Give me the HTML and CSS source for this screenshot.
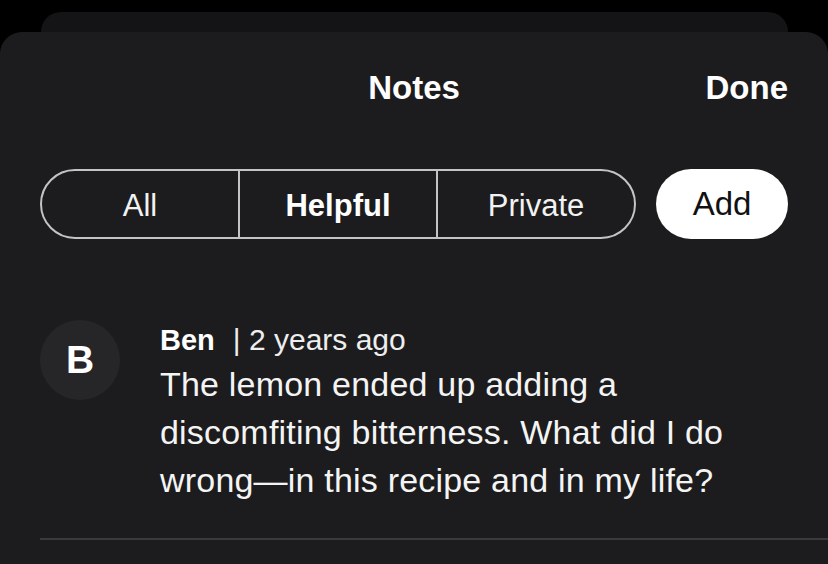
FILE: index.html
```html
<!DOCTYPE html>
<html>
<head>
<meta charset="utf-8">
<link rel="stylesheet" href="styles.css">
</head>
<body>
<div class="screen">
  <div class="back-card"></div>
  <div class="sheet">
    <header class="header">
      <div class="spacer"></div>
      <h1 class="title">Notes</h1>
      <div class="done">Done</div>
    </header>
    <div class="controls">
      <div class="segmented">
        <div class="seg">All</div>
        <div class="seg active">Helpful</div>
        <div class="seg">Private</div>
      </div>
      <button class="add">Add</button>
    </div>
    <div class="note">
      <div class="avatar">B</div>
      <div class="note-body">
        <div class="meta"><span class="name">Ben</span><span class="time">| 2 years ago</span></div>
        <p class="text">The lemon ended up adding a discomfiting bitterness. What did I do wrong—in this recipe and in my life?</p>
      </div>
    </div>
    <div class="divider"></div>
  </div>
</div>
</body>
</html>
```
FILE: styles.css
```css
* { box-sizing: border-box; }
html, body { margin: 0; padding: 0; background: #000; }
body { font-family: "Liberation Sans", Arial, sans-serif; color: #fff; }
.screen { width: 828px; height: 564px; overflow: hidden; padding-top: 12px; }
.back-card {
  margin: 0 40px 0 41px;
  height: 40px;
  background: #141416;
  border-radius: 20px 20px 0 0;
}
.sheet {
  margin-top: -20px;
  height: 600px;
  background: #1c1c1e;
  border-radius: 22px 22px 0 0;
  padding: 0 40px 0 40px;
}
.header {
  display: flex;
  align-items: center;
  justify-content: space-between;
  height: 112px;
}
.spacer { width: 84px; }
.title { margin: 0; font-size: 33px; font-weight: bold; }
.done { font-size: 33px; font-weight: bold; width: 84px; text-align: right; }
.controls {
  display: flex;
  gap: 20px;
  margin-top: 25px;
}
.segmented {
  display: flex;
  width: 596px;
  height: 70px;
  border: 2px solid #c4c4c6;
  border-radius: 35px;
}
.seg {
  flex: 1;
  display: flex;
  align-items: center;
  justify-content: center;
  font-size: 31px;
  color: #f2f2f2;
  padding-top: 3px;
}
.seg + .seg { border-left: 2px solid #c4c4c6; }
.seg.active { font-weight: bold; color: #fff; }
.add {
  flex: 1;
  height: 70px;
  border: none;
  border-radius: 35px;
  background: #fff;
  color: #111;
  font-family: "Liberation Sans", Arial, sans-serif;
  font-size: 33px;
  padding: 0;
}
.note {
  display: flex;
  gap: 40px;
  margin-top: 80px;
}
.avatar {
  width: 80px;
  height: 80px;
  flex: none;
  border-radius: 50%;
  background: #262628;
  display: flex;
  align-items: center;
  justify-content: center;
  font-size: 39px;
  font-weight: bold;
  margin-top: 1px;
}
.note-body { flex: 1; margin-top: 1px; }
.meta { font-size: 30px; line-height: 40px; color: #eee; }
.name { font-weight: bold; color: #fff; margin-right: 18px; font-size: 29px; }
.text {
  margin: 0;
  font-size: 34px;
  line-height: 48px;
  letter-spacing: 0.2px;
  color: #f4f4f4;
  width: 620px;
}
.divider {
  margin-top: 34px;
  height: 2px;
  background: #3a3a3c;
  margin-right: -40px;
}
```
